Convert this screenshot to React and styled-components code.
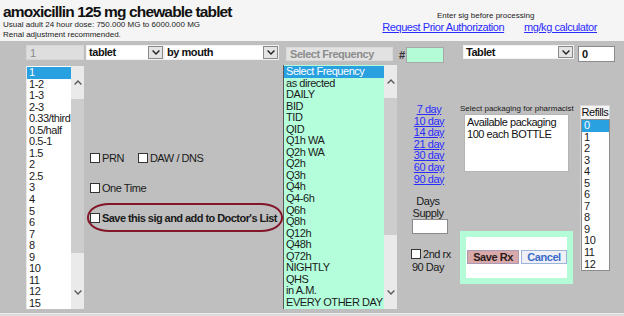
import React from "react";
import styled, { createGlobalStyle, css } from "styled-components";

const GlobalStyle = createGlobalStyle`
	html, body {
		margin: 0;
		padding: 0;
		background: #dcdcdc;
	}
	body {
		font-family: "Liberation Sans", Arial, sans-serif;
	}
`;

// the screenshot's text is narrow for its height, so a size up with tighter tracking
const bodyText = css`
	font-size: 11px;
	letter-spacing: -0.45px;
`;

const Page = styled.div`
	width: 624px;
	height: 316px;
	overflow: hidden;
	display: flex;
	flex-direction: column;
`;

const Header = styled.div`
	height: 41px;
	flex: none;
	box-sizing: border-box;
	background: #f5f5f5;
	display: flex;
	justify-content: space-between;
	padding: 0 27px 0 3px;
`;

const Title = styled.h1`
	margin: 4px 0 0;
	font-size: 15.5px;
	letter-spacing: -0.85px;
	line-height: 16px;
	font-weight: bold;
	color: #111;
`;

const Note = styled.div`
	font-size: 8px;
	line-height: 10px;
	color: #222;
	white-space: nowrap;
`;

const HeaderRight = styled.div`
	padding-top: 11px;
	display: flex;
	flex-direction: column;
	align-items: center;
`;

const Hint = styled(Note)`
	margin-right: 8px;
`;

const LinkRow = styled.div`
	display: flex;
	gap: 20px;
`;

const Link = styled.a`
	${bodyText};
	line-height: 12px;
	color: #2b2bff;
	text-decoration: underline;
	cursor: pointer;
	white-space: nowrap;
`;

const Panel = styled.div`
	height: 272px;
	flex: none;
	background: #bfbfbf;
	border-bottom: 1px solid #ececec;
	padding-left: 26px;
	display: grid;
	grid-template-columns: 60px 197px 115px 60px 119px 39px;
	grid-template-rows: 24px 1fr;
	align-items: start;
`;

const Field = styled.div`
	box-sizing: border-box;
	display: flex;
	align-items: center;
	padding-left: 3px;
	${bodyText};
	font-weight: bold;
	color: #111;
	background: #fff;
	border: 1px solid #9a9a9a;
	white-space: nowrap;
`;

const QtyField = styled(Field)`
	width: 58px;
	height: 15px;
	margin-top: 4px;
	background: #dedede;
	border-color: #d6d6d6;
	color: #8a8a8a;
	font-weight: normal;
`;

const FreqField = styled(Field)`
	width: 107px;
	height: 14px;
	margin: 6px 0 0 3px;
	background: #e2e2e2;
	border-color: #dadada;
	color: #8c8c8c;
`;

const CountCell = styled.div`
	display: flex;
	align-items: center;
	margin-top: 6px;
	${bodyText};
	font-weight: bold;
	color: #333;
	gap: 1px;
	padding-left: 1px;
`;

const CountField = styled(Field)`
	width: 38px;
	height: 16px;
	background: #b4fcd8;
	border-color: #a8a8a8;
`;

const RefillField = styled(Field)`
	width: 37px;
	height: 16px;
	margin: 5px 0 0 1px;
	border-color: #8c8c8c;
`;

const SelectRow = styled.div`
	display: flex;
	margin-top: 4px;
`;

const Select = styled.div`
	box-sizing: border-box;
	display: flex;
	width: ${(p) => p.$w}px;
	height: ${(p) => p.$h || 15}px;
	margin-left: ${(p) => p.$ml || 0}px;
	margin-top: ${(p) => p.$mt || 0}px;
	background: #fff;
	border: 1px solid #f2f2f2;
`;

const SelectText = styled.div`
	flex: 1;
	padding-left: 2px;
	${bodyText};
	font-weight: bold;
	line-height: 13px;
	color: #111;
	white-space: nowrap;
`;

const SelectArrow = styled.div`
	box-sizing: border-box;
	width: 15px;
	flex: none;
	display: flex;
	align-items: center;
	justify-content: center;
	background: #e4e4e4;
	border: 1px solid #8a8a8a;
	color: #222;
`;

const ListBox = styled.div`
	box-sizing: border-box;
	display: flex;
	width: ${(p) => p.$w}px;
	height: ${(p) => p.$h}px;
	margin: ${(p) => p.$mt || 0}px 0 0 ${(p) => p.$ml || 0}px;
	background: ${(p) => p.$bg || "#fff"};
	border-left: 1px solid ${(p) => p.$edge || "#e6e6e6"};
	overflow: hidden;
`;

const Items = styled.div`
	flex: 1;
	padding-top: 1px;
	overflow: hidden;
`;

const Item = styled.div`
	height: 11.55px;
	${bodyText};
	line-height: 11.55px;
	padding-left: 2px;
	white-space: nowrap;
	color: ${(p) => (p.$selected ? "#fff" : "#1a1a1a")};
	background: ${(p) => (p.$selected ? "#29a0e0" : "transparent")};
`;

const Scrollbar = styled.div`
	width: ${(p) => p.$w}px;
	flex: none;
	background: #eaeaea;
	display: flex;
	flex-direction: column;
	color: #5a5a5a;
`;

const ScrollButton = styled.div`
	height: ${(p) => p.$h}px;
	flex: none;
	display: flex;
	align-items: center;
	justify-content: center;
`;

const ScrollThumb = styled.div`
	height: ${(p) => p.$h}px;
	flex: none;
	background: #cdcdcd;
`;

const ScrollTrack = styled.div`
	flex: 1;
`;

const OptionsCol = styled.div`
	padding-top: 88px;
	display: flex;
	flex-direction: column;
`;

const CheckRow = styled.label`
	display: flex;
	align-items: center;
	height: 10px;
	${bodyText};
	color: #1a1a1a;
	white-space: nowrap;
	margin-top: ${(p) => p.$mt || 0}px;
	padding-left: ${(p) => p.$pl || 0}px;
`;

const Box = styled.span`
	box-sizing: border-box;
	width: 10px;
	height: 10px;
	flex: none;
	background: #fff;
	border: 1px solid #333;
	margin-right: 2px;
	margin-left: ${(p) => p.$ml || 0}px;
`;

const SaveOval = styled.div`
	box-sizing: border-box;
	width: 196px;
	height: 29px;
	margin: 10px 0 0 1px;
	padding-left: 1px;
	border: 2px solid #84162a;
	border-radius: 22px / 14px;
	display: flex;
	align-items: center;
	font-weight: bold;

	${CheckRow} {
		letter-spacing: -0.55px;
	}
`;

const DaysCol = styled.div`
	padding-top: 39px;
	display: flex;
	flex-direction: column;
	align-items: center;
`;

const DayLink = styled(Link)`
	line-height: 11.6px;
	height: 11.6px;
	margin-left: 2px;
`;

const DaysLabel = styled.div`
	margin-top: 10px;
	${bodyText};
	line-height: 12px;
	text-align: center;
	color: #1a1a1a;
`;

const DaysInput = styled.div`
	box-sizing: border-box;
	width: 36px;
	height: 15px;
	margin-left: 4px;
	background: #fff;
	border: 1px solid #8a8a8a;
`;

const SecondRx = styled.div`
	align-self: stretch;
	padding-left: 13px;
	margin-top: 15px;
`;

const NinetyDay = styled.div`
	margin-top: 2px;
	${bodyText};
	line-height: 12px;
	color: #1a1a1a;
`;

const PackCol = styled.div`
	display: flex;
	flex-direction: column;
	align-items: flex-start;
`;

const PackLabel = styled(Note)`
	margin-top: 39px;
	padding-left: 2px;
	color: #1a1a1a;
`;

const PackBox = styled.div`
	box-sizing: border-box;
	width: 105px;
	height: 58px;
	margin-left: 6px;
	padding: 1px 2px;
	background: #fff;
	border: 1px solid #b4b4b4;
	${bodyText};
	line-height: 12px;
	color: #111;
	white-space: nowrap;
`;

const SaveFrame = styled.div`
	box-sizing: border-box;
	width: 113px;
	height: 53px;
	margin: 59px 0 0 2px;
	padding: 13px 0 0 1px;
	background: #fff;
	border: 6px solid #b4fcd8;
	display: flex;
	align-items: flex-start;
	gap: 2px;
`;

const Button = styled.button`
	box-sizing: border-box;
	width: ${(p) => p.$w}px;
	height: 14px;
	padding: 0;
	font-family: inherit;
	${bodyText};
	font-weight: bold;
	line-height: 12px;
	color: ${(p) => (p.$primary ? "#2a1a1a" : "#3a6bc8")};
	background: ${(p) => (p.$primary ? "#d9a9a9" : "#eef0f6")};
	border: 1px solid ${(p) => (p.$primary ? "#a99ab8" : "#9cb4dc")};
	cursor: pointer;
`;

const RefillsBox = styled.div`
	box-sizing: border-box;
	width: 30px;
	height: 166px;
	margin: 40px 0 0 3px;
	background: #f4f4f4;
	border: 1px solid #d6d6d6;
	display: flex;
	flex-direction: column;
`;

const RefillsLabel = styled.div`
	${bodyText};
	line-height: 13px;
	text-align: center;
	color: #111;
`;

const RefillsList = styled.div`
	flex: 1;
	margin: 0 -1px -1px 0;
	background: #fff;
	border: 1px solid #8c8c8c;
	overflow: hidden;
`;

const Chevron = ({ up }) => (
	<svg width="8" height="5" viewBox="0 0 8 5">
		<path
			d={up ? "M0.6 4.4 L4 1 L7.4 4.4" : "M0.6 0.6 L4 4 L7.4 0.6"}
			fill="none"
			stroke="currentColor"
			strokeWidth="1.4"
		/>
	</svg>
);

const qtyOptions = ["1", "1-2", "1-3", "2-3", "0.33/third", "0.5/half", "0.5-1", "1.5", "2", "2.5", "3", "4", "5", "6", "7", "8", "9", "10", "11", "12", "15"];

const frequencies = ["Select Frequency", "as directed", "DAILY", "BID", "TID", "QID", "Q1h WA", "Q2h WA", "Q2h", "Q3h", "Q4h", "Q4-6h", "Q6h", "Q8h", "Q12h", "Q48h", "Q72h", "NIGHTLY", "QHS", "in A.M.", "EVERY OTHER DAY"];

const dayOptions = [7, 10, 14, 21, 30, 60, 90];

const refills = Array.from({ length: 13 }, (_, i) => String(i));

const SelectControl = ({ value, ...rest }) => (
	<Select {...rest}>
		<SelectText>{value}</SelectText>
		<SelectArrow>
			<Chevron />
		</SelectArrow>
	</Select>
);

const App = () => {
	return (
		<Page>
			<GlobalStyle />
			<Header>
				<div>
					<Title>amoxicillin 125 mg chewable tablet</Title>
					<Note>Usual adult 24 hour dose: 750.000 MG to 6000.000 MG</Note>
					<Note>Renal adjustment recommended.</Note>
				</div>
				<HeaderRight>
					<Hint>Enter sig before processing</Hint>
					<LinkRow>
						<Link>Request Prior Authorization</Link>
						<Link>mg/kg calculator</Link>
					</LinkRow>
				</HeaderRight>
			</Header>

			<Panel>
				<QtyField>1</QtyField>
				<SelectRow>
					<SelectControl value="tablet" $w={78} />
					<SelectControl value="by mouth" $w={115} />
				</SelectRow>
				<FreqField>Select Frequency</FreqField>
				<CountCell>
					#<CountField />
				</CountCell>
				<SelectControl value="Tablet" $w={111} $h={14} $ml={5} $mt={4} />
				<RefillField>0</RefillField>

				<ListBox $w={58} $h={243} $mt={1}>
					<Items>
						{qtyOptions.map((q, i) => (
							<Item key={q} $selected={i === 0}>
								{q}
							</Item>
						))}
					</Items>
					<Scrollbar $w={13}>
						<ScrollButton $h={33}>
							<Chevron up />
						</ScrollButton>
						<ScrollThumb $h={154} />
						<ScrollTrack />
						<ScrollButton $h={33}>
							<Chevron />
						</ScrollButton>
					</Scrollbar>
				</ListBox>

				<OptionsCol>
					<CheckRow $pl={4}>
						<Box />
						PRN
						<Box $ml={14} />
						DAW / DNS
					</CheckRow>
					<CheckRow $pl={4} $mt={20}>
						<Box />
						One Time
					</CheckRow>
					<SaveOval>
						<CheckRow>
							<Box />
							Save this sig and add to Doctor's List
						</CheckRow>
					</SaveOval>
				</OptionsCol>

				<ListBox $w={114} $h={244} $bg="#b4fedc" $edge="#5a5a5a">
					<Items>
						{frequencies.map((f, i) => (
							<Item key={f} $selected={i === 0}>
								{f}
							</Item>
						))}
					</Items>
					<Scrollbar $w={13}>
						<ScrollButton $h={33}>
							<Chevron up />
						</ScrollButton>
						<ScrollThumb $h={137} />
						<ScrollTrack />
						<ScrollButton $h={33}>
							<Chevron />
						</ScrollButton>
					</Scrollbar>
				</ListBox>

				<DaysCol>
					{dayOptions.map((d) => (
						<DayLink key={d}>{d} day</DayLink>
					))}
					<DaysLabel>
						Days
						<br />
						Supply
					</DaysLabel>
					<DaysInput />
					<SecondRx>
						<CheckRow>
							<Box />
							2nd rx
						</CheckRow>
					</SecondRx>
					<NinetyDay>90 Day</NinetyDay>
				</DaysCol>

				<PackCol>
					<PackLabel>Select packaging for pharmacist</PackLabel>
					<PackBox>
						Available packaging
						<br />
						100 each BOTTLE
					</PackBox>
					<SaveFrame>
						<Button $primary $w={52}>
							Save Rx
						</Button>
						<Button $w={46}>Cancel</Button>
					</SaveFrame>
				</PackCol>

				<RefillsBox>
					<RefillsLabel>Refills</RefillsLabel>
					<RefillsList>
						{refills.map((r, i) => (
							<Item key={r} $selected={i === 0}>
								{r}
							</Item>
						))}
					</RefillsList>
				</RefillsBox>
			</Panel>
		</Page>
	);
};

export default App;
